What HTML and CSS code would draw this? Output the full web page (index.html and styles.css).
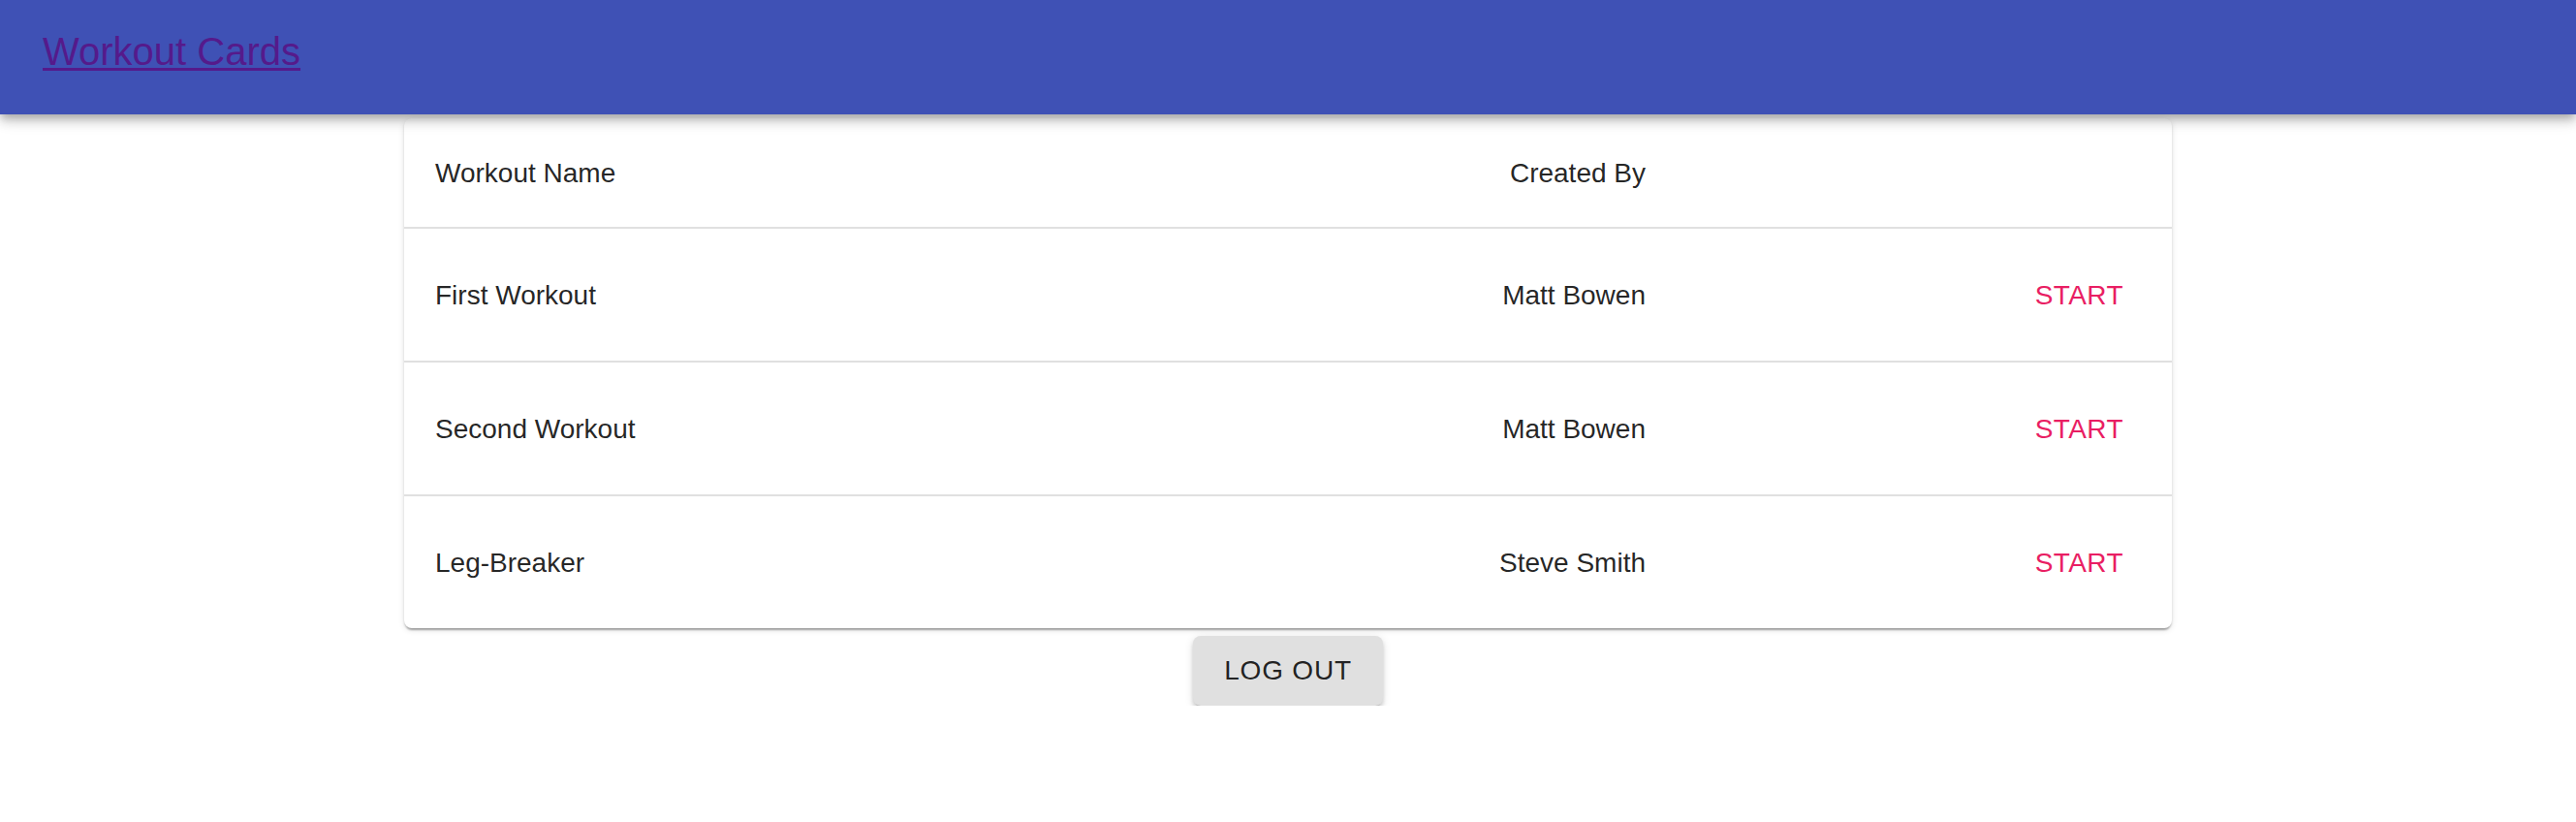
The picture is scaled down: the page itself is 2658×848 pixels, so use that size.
FILE: index.html
```html
<!DOCTYPE html>
<html lang="en">
<head>
<meta charset="utf-8">
<title>Workout Cards</title>
<link rel="stylesheet" href="styles.css">
</head>
<body>
<header class="appbar">
  <a class="brand" href="#">Workout Cards</a>
</header>
<main class="content">
  <div class="card">
    <div class="row head">
      <div class="cell name">Workout Name</div>
      <div class="cell creator">Created By</div>
      <div class="cell action"></div>
    </div>
    <div class="row">
      <div class="cell name">First Workout</div>
      <div class="cell creator">Matt Bowen</div>
      <div class="cell action"><button class="start">Start</button></div>
    </div>
    <div class="row">
      <div class="cell name">Second Workout</div>
      <div class="cell creator">Matt Bowen</div>
      <div class="cell action"><button class="start">Start</button></div>
    </div>
    <div class="row last">
      <div class="cell name">Leg-Breaker</div>
      <div class="cell creator">Steve Smith</div>
      <div class="cell action"><button class="start">Start</button></div>
    </div>
  </div>
  <div class="actions">
    <button class="logout">Log Out</button>
  </div>
</main>
</body>
</html>
```

FILE: styles.css
```css
* { box-sizing: border-box; }

html, body {
  margin: 0;
  padding: 0;
  background: #ffffff;
  font-family: "Liberation Sans", Arial, Helvetica, sans-serif;
  color: rgba(0, 0, 0, 0.87);
}

.appbar {
  height: 118px;
  background: #3f51b5;
  padding: 29px 44px 0;
  box-shadow: 0 4px 8px -2px rgba(0,0,0,0.2), 0 8px 10px 0 rgba(0,0,0,0.14), 0 2px 20px 0 rgba(0,0,0,0.12);
  position: relative;
  z-index: 2;
}

.brand {
  font-size: 40px;
  line-height: 48px;
  color: #551a8b;
  text-decoration: underline;
  text-decoration-thickness: 3px;
  text-underline-offset: 3px;
}

.content {
  display: flex;
  flex-direction: column;
  align-items: center;
}

.card {
  width: 1824px;
  margin-top: 4px;
  background: #ffffff;
  border-radius: 8px;
  box-shadow: 0 4px 2px -2px rgba(0,0,0,0.2), 0 2px 2px 0 rgba(0,0,0,0.14), 0 2px 6px 0 rgba(0,0,0,0.12);
}

.row {
  display: grid;
  grid-template-columns: 1fr auto 511px;
  align-items: center;
  height: 138px;
  padding-top: 2px;
  border-bottom: 2px solid #e0e0e0;
  font-size: 28px;
  line-height: 40px;
}

.row.head { height: 114px; }
.row.last { height: 136px; border-bottom: none; }

.cell { padding: 0 32px; }
.cell.creator { text-align: right; }
.cell.action {
  display: flex;
  justify-content: flex-end;
  padding-right: 34px;
}

.start {
  font-family: inherit;
  font-size: 28px;
  line-height: 48px;
  letter-spacing: 0.4px;
  text-transform: uppercase;
  color: #e91e63;
  background: transparent;
  border: none;
  padding: 12px 16px;
  border-radius: 8px;
  cursor: pointer;
}

.actions {
  display: flex;
  justify-content: center;
  margin-top: 8px;
}

.logout {
  font-family: inherit;
  font-size: 28px;
  line-height: 48px;
  height: 72px;
  letter-spacing: 0.8px;
  text-transform: uppercase;
  color: rgba(0, 0, 0, 0.87);
  background: #e0e0e0;
  border: none;
  border-radius: 8px;
  padding: 12px 32px;
  box-shadow: 0 6px 2px -4px rgba(0,0,0,0.2), 0 4px 4px 0 rgba(0,0,0,0.14), 0 2px 10px 0 rgba(0,0,0,0.12);
  cursor: pointer;
}
```
